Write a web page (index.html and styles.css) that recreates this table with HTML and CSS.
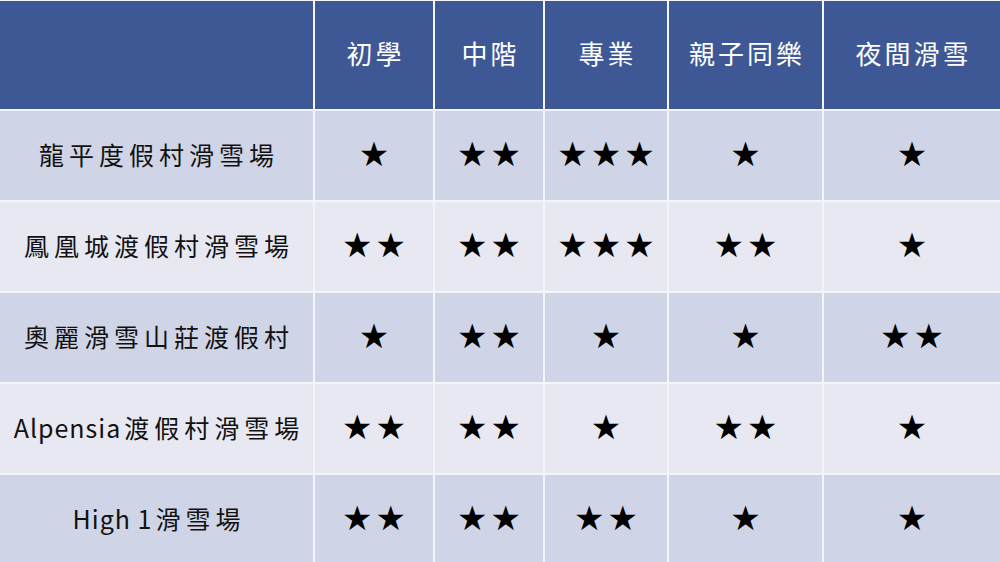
FILE: index.html
```html
<!DOCTYPE html>
<html lang="zh-Hant">
<head>
<meta charset="utf-8">
<link rel="stylesheet" href="styles.css">
</head>
<body>
<div class="table">
  <div class="cell head"></div>
  <div class="cell head">初學</div>
  <div class="cell head">中階</div>
  <div class="cell head">專業</div>
  <div class="cell head">親子同樂</div>
  <div class="cell head">夜間滑雪</div>

  <div class="cell odd name">龍平度假村滑雪場</div>
  <div class="cell odd star">★</div>
  <div class="cell odd star">★★</div>
  <div class="cell odd star">★★★</div>
  <div class="cell odd star">★</div>
  <div class="cell odd star">★</div>

  <div class="cell even name">鳳凰城渡假村滑雪場</div>
  <div class="cell even star">★★</div>
  <div class="cell even star">★★</div>
  <div class="cell even star">★★★</div>
  <div class="cell even star">★★</div>
  <div class="cell even star">★</div>

  <div class="cell odd name">奧麗滑雪山莊渡假村</div>
  <div class="cell odd star">★</div>
  <div class="cell odd star">★★</div>
  <div class="cell odd star">★</div>
  <div class="cell odd star">★</div>
  <div class="cell odd star">★★</div>

  <div class="cell even name"><span class="latin">Alpensia</span>渡假村滑雪場</div>
  <div class="cell even star">★★</div>
  <div class="cell even star">★★</div>
  <div class="cell even star">★</div>
  <div class="cell even star">★★</div>
  <div class="cell even star">★</div>

  <div class="cell odd name"><span class="latin">High 1</span>滑雪場</div>
  <div class="cell odd star">★★</div>
  <div class="cell odd star">★★</div>
  <div class="cell odd star">★★</div>
  <div class="cell odd star">★</div>
  <div class="cell odd star">★</div>
</div>
</body>
</html>
```

FILE: styles.css
```css
html, body {
  margin: 0;
  padding: 0;
  background: #ffffff;
}
body {
  width: 1000px;
  height: 562px;
  overflow: hidden;
  font-family: "Noto Sans CJK TC", "Noto Sans", sans-serif;
}
.table {
  display: grid;
  grid-template-columns: 313px 118px 108px 122px 153px 176px;
  grid-template-rows: 108px repeat(5, 89px);
  gap: 2px;
  padding-top: 1px;
  background: #f4f5fa;
  width: 1000px;
}
.cell {
  display: flex;
  align-items: center;
  justify-content: center;
  white-space: nowrap;
}
.head {
  background: #3e5895;
  color: #ffffff;
  font-size: 26px;
  letter-spacing: 3px;
  padding-left: 3px;
  padding-bottom: 5px;
}
.odd { background: #cfd5e6; }
.even { background: #e7e8f1; }
.name {
  font-size: 25px;
  letter-spacing: 5px;
  color: #111111;
  padding-left: 5px;
  padding-bottom: 3px;
}
.latin {
  letter-spacing: 1px;
  margin-right: 3px;
}
.star {
  font-family: "DejaVu Sans", sans-serif;
  font-size: 34px;
  letter-spacing: 3px;
  color: #000000;
  padding-left: 3px;
  padding-bottom: 4px;
}
```
